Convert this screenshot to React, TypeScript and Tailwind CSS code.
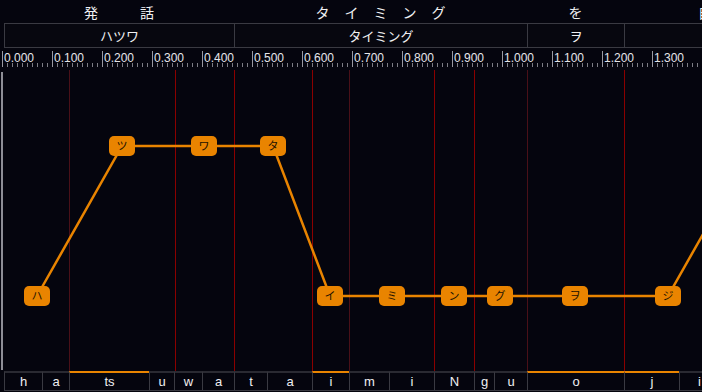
const ORANGE = '#e98400';

const words = [
    { w: 'w-[230px]', chars: ['発', '話'], gap: 'gap-[42px]', kana: 'ハツワ' },
    { w: 'w-[293px]', chars: ['タ', 'イ', 'ミ', 'ン', 'グ'], gap: 'gap-[15px]', kana: 'タイミング' },
    { w: 'w-[97px]', chars: ['を'], gap: 'gap-0', kana: 'ヲ' },
    { w: 'w-[162px]', chars: ['自'], gap: 'gap-0', kana: '' },
];

const phonemes = [
    { p: 'h', w: 'w-[38px]', hi: false },
    { p: 'a', w: 'w-[27px]', hi: false },
    { p: 'ts', w: 'w-[80px]', hi: true },
    { p: 'u', w: 'w-[25px]', hi: false },
    { p: 'w', w: 'w-[28px]', hi: false },
    { p: 'a', w: 'w-[32px]', hi: false },
    { p: 't', w: 'w-[33px]', hi: false },
    { p: 'a', w: 'w-[45px]', hi: false },
    { p: 'i', w: 'w-[37px]', hi: true },
    { p: 'm', w: 'w-[40px]', hi: false },
    { p: 'i', w: 'w-[45px]', hi: false },
    { p: 'N', w: 'w-[40px]', hi: false },
    { p: 'g', w: 'w-[20px]', hi: false },
    { p: 'u', w: 'w-[33px]', hi: false },
    { p: 'o', w: 'w-[97px]', hi: true },
    { p: 'j', w: 'w-[55px]', hi: true },
    { p: 'i', w: 'w-[40px]', hi: false },
];

const boundaries = [
    { x: 69, dim: true },
    { x: 175, dim: false },
    { x: 234, dim: false },
    { x: 312, dim: false },
    { x: 349, dim: true },
    { x: 434, dim: false },
    { x: 474, dim: false },
    { x: 527, dim: true },
    { x: 624, dim: false },
];

const nodes = [
    { k: 'ハ', x: 37, y: 226 },
    { k: 'ツ', x: 122, y: 76 },
    { k: 'ワ', x: 204, y: 76 },
    { k: 'タ', x: 273, y: 76 },
    { k: 'イ', x: 330, y: 226 },
    { k: 'ミ', x: 392, y: 226 },
    { k: 'ン', x: 454, y: 226 },
    { k: 'グ', x: 500, y: 226 },
    { k: 'ヲ', x: 575, y: 226 },
    { k: 'ジ', x: 668, y: 226 },
];

function Ruler() {
    const minor = Array.from({ length: 140 }, (_, i) => i);
    const major = Array.from({ length: 14 }, (_, i) => i);
    return (
        <svg width={702} height={22} className="block">
            {minor.map((i) =>
                i % 10 === 0 ? null : (
                    <line key={i} x1={2.5 + i * 5} x2={2.5 + i * 5} y1={15} y2={19} stroke="#7d7d85" strokeWidth={1} />
                ),
            )}
            {major.map((i) => (
                <g key={i}>
                    <line x1={2.5 + i * 50} x2={2.5 + i * 50} y1={3} y2={19} stroke="#9a9aa2" strokeWidth={1} />
                    <text x={4 + i * 50} y={14} fontSize={12} fill="#e6e6ea" fontFamily="'Liberation Sans', sans-serif">
                        {(i / 10).toFixed(3)}
                    </text>
                </g>
            ))}
        </svg>
    );
}

function PitchChart() {
    const points = [...nodes.map((n) => `${n.x},${n.y}`), '753,76'].join(' ');
    return (
        <svg width={702} height={301} className="block">
            {boundaries.map((b) => (
                <line
                    key={b.x}
                    x1={b.x + 0.5}
                    x2={b.x + 0.5}
                    y1={0}
                    y2={301}
                    stroke={b.dim ? '#4a1018' : '#8a0000'}
                    strokeWidth={1}
                />
            ))}
            <rect x={1} y={2} width={2} height={298} fill="#8e8e96" />
            <polyline points={points} fill="none" stroke={ORANGE} strokeWidth={2.5} />
            {nodes.map((n) => (
                <g key={n.k}>
                    <rect x={n.x - 13} y={n.y - 10} width={26} height={20} rx={5} fill={ORANGE} />
                    <text
                        x={n.x}
                        y={n.y + 4}
                        textAnchor="middle"
                        fontSize={11}
                        fill="#1c1200"
                        fontFamily="'Noto Sans CJK JP', sans-serif"
                    >
                        {n.k}
                    </text>
                </g>
            ))}
        </svg>
    );
}

export default function App() {
    return (
        <div className="flex h-[392px] w-[702px] flex-col overflow-hidden bg-[#05050e] font-['Noto_Sans_CJK_JP',sans-serif] text-[#f0f0f2]">
            <div className="flex h-[23px] shrink-0 pl-[4px]">
                {words.map((w, i) => (
                    <div key={i} className={`${w.w} flex shrink-0 items-center justify-center text-[14px] leading-none`}>
                        <div className={`flex ${w.gap}`}>
                            {w.chars.map((c, j) => (
                                <span key={j}>{c}</span>
                            ))}
                        </div>
                    </div>
                ))}
            </div>

            <div className="flex h-[25px] shrink-0 pl-[4px]">
                {words.map((w, i) => (
                    <div
                        key={i}
                        className={`${w.w} flex shrink-0 items-center justify-center border-y border-l border-[#3a3a42] bg-[#07070f] text-[13px] leading-none`}
                    >
                        {w.kana}
                    </div>
                ))}
            </div>

            <div className="h-[22px] shrink-0">
                <Ruler />
            </div>

            <div className="h-[301px] shrink-0">
                <PitchChart />
            </div>

            <div className="flex h-[21px] shrink-0 pl-[4px] font-['Liberation_Sans',sans-serif]">
                {phonemes.map((ph, i) => (
                    <div
                        key={i}
                        className={`${ph.w} flex h-[20px] shrink-0 items-center justify-center border-b border-l border-t-2 border-b-[#3a3a42] border-l-[#3a3a42] text-[13px] leading-none ${
                            ph.hi ? 'border-t-[#e98400]' : 'border-t-[#2a2a32]'
                        }`}
                    >
                        {ph.p}
                    </div>
                ))}
            </div>
        </div>
    );
}
